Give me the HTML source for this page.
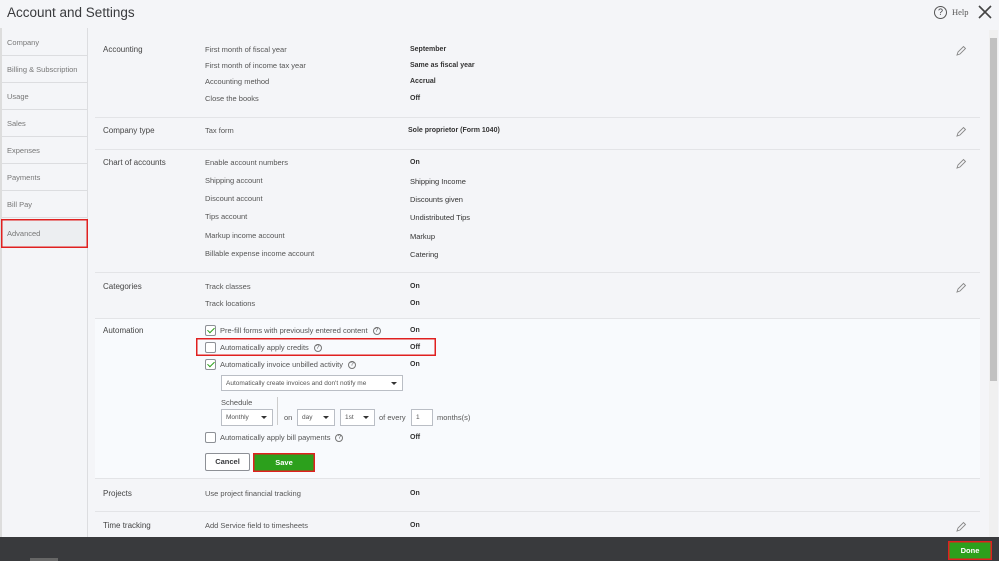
<!DOCTYPE html>
<html><head><meta charset="utf-8"><style>
*{margin:0;padding:0;box-sizing:border-box}
body{width:999px;height:561px;overflow:hidden;background:#f4f5f8;font-family:"Liberation Sans",sans-serif;color:#393a3d;position:relative}
.a{position:absolute;white-space:nowrap}
.t{font-size:7.5px;color:#555}
.v{font-size:7px;font-weight:bold;color:#333;margin-top:1px}
.s{font-size:8px;color:#444}
.side{position:absolute;left:2px;width:85px;height:27px;border-bottom:1px solid #dcdde0;font-size:7.5px;color:#777;padding:9px 0 0 5px}
.hr{position:absolute;left:95px;width:885px;height:1px;background:#e3e4e7}
.cb{position:absolute;width:11px;height:11px;border:1px solid #8d9096;background:#fff;border-radius:2px}
.cb.on:after{content:"";position:absolute;left:3px;top:0px;width:3px;height:6px;border:solid #2ca01c;border-width:0 1.5px 1.5px 0;transform:rotate(45deg)}
.q{display:inline-block;width:8px;height:8px;border:1px solid #777;border-radius:50%;font-size:6px;text-align:center;line-height:7px;margin-left:5px;vertical-align:middle}
.sel{position:absolute;height:16px;border:1px solid #babec5;background:#fff;font-size:6.5px;color:#555;padding:4px 4px}
.sel.d:after{content:"";position:absolute;right:5px;top:6px;border:3px solid transparent;border-top:3px solid #333}
.pen{position:absolute;width:12px;height:12px}
.red{box-shadow:inset 0 0 0 1.5px #e02020}
</style></head><body>
<div class="a" style="left:7px;top:5px;font-size:13.5px;color:#393a3d">Account and Settings</div>
<div class="a" style="left:934px;top:6px;width:13px;height:13px;border:1.3px solid #555;border-radius:50%;font-size:9px;text-align:center;line-height:11px">?</div>
<div class="a" style="left:952px;top:7px;font-size:8.5px;font-family:'Liberation Serif',serif;color:#555">Help</div>
<svg class="a" style="left:978px;top:5px" width="14" height="14"><path d="M1 1L13 13M13 1L1 13" stroke="#444" stroke-width="1.6"/></svg>
<div class="a" style="left:0;top:28px;width:2px;height:510px;background:#ddd"></div>
<div class="a" style="left:87px;top:28px;width:1px;height:510px;background:#dcdde0"></div>
<div class="side" style="top:29px">Company</div>
<div class="side" style="top:56px">Billing &amp; Subscription</div>
<div class="side" style="top:83px">Usage</div>
<div class="side" style="top:110px">Sales</div>
<div class="side" style="top:137px">Expenses</div>
<div class="side" style="top:164px">Payments</div>
<div class="side" style="top:191px">Bill Pay</div>
<div class="a red" style="left:1px;top:219px;width:87px;height:29px;background:#eceef1;font-size:7.5px;color:#777;padding:10px 0 0 6px">Advanced</div>
<div class="a" style="left:989px;top:30px;width:9px;height:508px;background:#f0f0f0"></div>
<div class="a" style="left:990px;top:38px;width:7px;height:343px;background:#c1c1c1"></div>
<div class="a s" style="left:103px;top:45px">Accounting</div>
<div class="a t" style="left:205px;top:45px">First month of fiscal year</div>
<div class="a t" style="left:205px;top:61px">First month of income tax year</div>
<div class="a t" style="left:205px;top:77px">Accounting method</div>
<div class="a t" style="left:205px;top:94px">Close the books</div>
<div class="a v" style="left:410px;top:45px">September</div>
<div class="a v" style="left:410px;top:61px">Same as fiscal year</div>
<div class="a v" style="left:410px;top:77px">Accrual</div>
<div class="a v" style="left:410px;top:94px">Off</div>
<div class="hr" style="top:117px"></div>
<div class="a s" style="left:103px;top:126px">Company type</div>
<div class="a t" style="left:205px;top:126px">Tax form</div>
<div class="a v" style="left:408px;top:126px">Sole proprietor (Form 1040)</div>
<div class="hr" style="top:149px"></div>
<div class="a s" style="left:103px;top:158px">Chart of accounts</div>
<div class="a t" style="left:205px;top:158px">Enable account numbers</div>
<div class="a t" style="left:205px;top:176px">Shipping account</div>
<div class="a t" style="left:205px;top:194px">Discount account</div>
<div class="a t" style="left:205px;top:212px">Tips account</div>
<div class="a t" style="left:205px;top:231px">Markup income account</div>
<div class="a t" style="left:205px;top:249px">Billable expense income account</div>
<div class="a v" style="left:410px;top:158px">On</div>
<div class="a t" style="left:410px;top:177px;color:#333">Shipping Income</div>
<div class="a t" style="left:410px;top:195px;color:#333">Discounts given</div>
<div class="a t" style="left:410px;top:213px;color:#333">Undistributed Tips</div>
<div class="a t" style="left:410px;top:232px;color:#333">Markup</div>
<div class="a t" style="left:410px;top:250px;color:#333">Catering</div>
<div class="hr" style="top:272px"></div>
<div class="a s" style="left:103px;top:282px">Categories</div>
<div class="a t" style="left:205px;top:282px">Track classes</div>
<div class="a t" style="left:205px;top:299px">Track locations</div>
<div class="a v" style="left:410px;top:282px">On</div>
<div class="a v" style="left:410px;top:299px">On</div>
<div class="a" style="left:95px;top:318px;width:885px;height:161px;background:#f8fafd;border-top:1px solid #e3e4e7;border-bottom:1px solid #e3e4e7"></div>
<div class="a s" style="left:103px;top:326px">Automation</div>
<div class="cb on" style="left:205px;top:325px"></div>
<div class="a t" style="left:220px;top:326px">Pre-fill forms with previously entered content<span class="q">?</span></div>
<div class="a v" style="left:410px;top:326px">On</div>
<div class="a red" style="left:196px;top:338px;width:240px;height:18px"></div>
<div class="cb" style="left:205px;top:342px"></div>
<div class="a t" style="left:220px;top:343px">Automatically apply credits<span class="q">?</span></div>
<div class="a v" style="left:410px;top:343px">Off</div>
<div class="cb on" style="left:205px;top:359px"></div>
<div class="a t" style="left:220px;top:360px">Automatically invoice unbilled activity<span class="q">?</span></div>
<div class="a v" style="left:410px;top:360px">On</div>
<div class="sel d" style="left:221px;top:375px;width:182px">Automatically create invoices and don't notify me</div>
<div class="a t" style="left:221px;top:398px">Schedule</div>
<div class="a" style="left:277px;top:397px;width:1px;height:28px;background:#ccc"></div>
<div class="sel d" style="left:221px;top:409px;width:52px;height:17px">Monthly</div>
<div class="a t" style="left:284px;top:413px">on</div>
<div class="sel d" style="left:297px;top:409px;width:38px;height:17px">day</div>
<div class="sel d" style="left:340px;top:409px;width:35px;height:17px">1st</div>
<div class="a t" style="left:379px;top:413px">of every</div>
<div class="sel" style="left:411px;top:409px;width:22px;height:17px">1</div>
<div class="a t" style="left:437px;top:413px">months(s)</div>
<div class="cb" style="left:205px;top:432px"></div>
<div class="a t" style="left:220px;top:433px">Automatically apply bill payments<span class="q">?</span></div>
<div class="a v" style="left:410px;top:433px">Off</div>
<div class="a" style="left:205px;top:453px;width:45px;height:18px;border:1px solid #8d9096;border-radius:2px;background:#fff;font-size:7.5px;font-weight:bold;text-align:center;line-height:16px;color:#393a3d">Cancel</div>
<div class="a red" style="left:253px;top:453px;width:62px;height:19px;background:#2ca01c;font-size:7.5px;font-weight:bold;text-align:center;line-height:19px;color:#fff">Save</div>
<div class="a s" style="left:103px;top:489px">Projects</div>
<div class="a t" style="left:205px;top:489px">Use project financial tracking</div>
<div class="a v" style="left:410px;top:489px">On</div>
<div class="hr" style="top:511px"></div>
<div class="a s" style="left:103px;top:521px">Time tracking</div>
<div class="a t" style="left:205px;top:521px">Add Service field to timesheets</div>
<div class="a v" style="left:410px;top:521px">On</div>
<svg class="pen" style="left:955px;top:45px" viewBox="0 0 12 12"><path d="M2 10L3 7L8.5 1.5L10.5 3.5L5 9Z" fill="none" stroke="#888" stroke-width="0.9"/></svg>
<svg class="pen" style="left:955px;top:126px" viewBox="0 0 12 12"><path d="M2 10L3 7L8.5 1.5L10.5 3.5L5 9Z" fill="none" stroke="#888" stroke-width="0.9"/></svg>
<svg class="pen" style="left:955px;top:158px" viewBox="0 0 12 12"><path d="M2 10L3 7L8.5 1.5L10.5 3.5L5 9Z" fill="none" stroke="#888" stroke-width="0.9"/></svg>
<svg class="pen" style="left:955px;top:282px" viewBox="0 0 12 12"><path d="M2 10L3 7L8.5 1.5L10.5 3.5L5 9Z" fill="none" stroke="#888" stroke-width="0.9"/></svg>
<svg class="pen" style="left:955px;top:521px" viewBox="0 0 12 12"><path d="M2 10L3 7L8.5 1.5L10.5 3.5L5 9Z" fill="none" stroke="#888" stroke-width="0.9"/></svg>
<div class="a" style="left:0;top:537px;width:999px;height:24px;background:#393a3d"></div>
<div class="a" style="left:30px;top:558px;width:28px;height:3px;background:#666"></div>
<div class="a red" style="left:948px;top:541px;width:44px;height:19px;background:#2ca01c;font-size:7.5px;font-weight:bold;color:#fff;text-align:center;line-height:19px">Done</div>
</body></html>
